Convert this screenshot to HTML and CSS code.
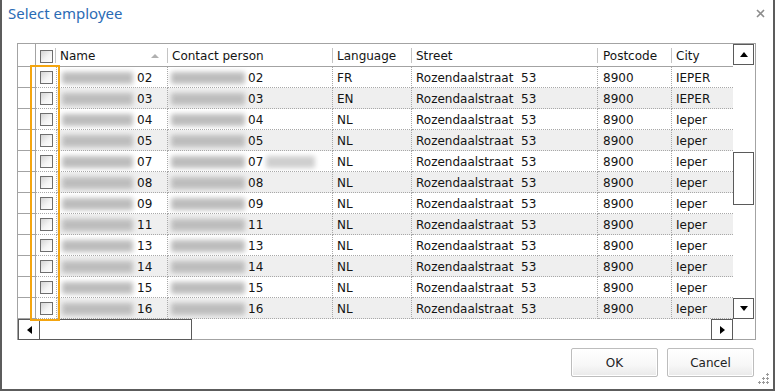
FILE: index.html
```html
<!DOCTYPE html>
<html>
<head>
<meta charset="utf-8">
<link rel="stylesheet" href="styles.css">
</head>
<body>
<div class="window">
  <div class="titlebar">
    <span class="title">Select employee</span>
    <svg class="close" width="9" height="9" viewBox="0 0 9 9"><path d="M1 1L8 8M8 1L1 8" stroke="#8c8c8c" stroke-width="1.6"/></svg>
  </div>
  <div class="grid">
    <div class="main">
      <div class="table">
        <div class="row head">
          <div class="c rh"></div>
          <div class="c cb sep"><span class="chk"></span></div>
          <div class="c name sep">Name<span class="sort"></span></div>
          <div class="c contact sep">Contact person</div>
          <div class="c lang sep">Language</div>
          <div class="c street sep">Street</div>
          <div class="c pc sep">Postcode</div>
          <div class="c city">City</div>
        </div>
        <div class="row">
          <div class="c rh"></div><div class="c cb"><span class="chk"></span></div>
          <div class="c name"><span class="blur b1"></span>02</div>
          <div class="c contact"><span class="blur b2"></span>02</div>
          <div class="c lang">FR</div><div class="c street">Rozendaalstraat  53</div><div class="c pc">8900</div><div class="c city">IEPER</div>
        </div>
        <div class="row alt">
          <div class="c rh"></div><div class="c cb"><span class="chk"></span></div>
          <div class="c name"><span class="blur b1"></span>03</div>
          <div class="c contact"><span class="blur b2"></span>03</div>
          <div class="c lang">EN</div><div class="c street">Rozendaalstraat  53</div><div class="c pc">8900</div><div class="c city">IEPER</div>
        </div>
        <div class="row">
          <div class="c rh"></div><div class="c cb"><span class="chk"></span></div>
          <div class="c name"><span class="blur b1"></span>04</div>
          <div class="c contact"><span class="blur b2"></span>04</div>
          <div class="c lang">NL</div><div class="c street">Rozendaalstraat  53</div><div class="c pc">8900</div><div class="c city">Ieper</div>
        </div>
        <div class="row alt">
          <div class="c rh"></div><div class="c cb"><span class="chk"></span></div>
          <div class="c name"><span class="blur b1"></span>05</div>
          <div class="c contact"><span class="blur b2"></span>05</div>
          <div class="c lang">NL</div><div class="c street">Rozendaalstraat  53</div><div class="c pc">8900</div><div class="c city">Ieper</div>
        </div>
        <div class="row">
          <div class="c rh"></div><div class="c cb"><span class="chk"></span></div>
          <div class="c name"><span class="blur b1"></span>07</div>
          <div class="c contact"><span class="blur b2"></span>07<span class="blur b3"></span></div>
          <div class="c lang">NL</div><div class="c street">Rozendaalstraat  53</div><div class="c pc">8900</div><div class="c city">Ieper</div>
        </div>
        <div class="row alt">
          <div class="c rh"></div><div class="c cb"><span class="chk"></span></div>
          <div class="c name"><span class="blur b1"></span>08</div>
          <div class="c contact"><span class="blur b2"></span>08</div>
          <div class="c lang">NL</div><div class="c street">Rozendaalstraat  53</div><div class="c pc">8900</div><div class="c city">Ieper</div>
        </div>
        <div class="row">
          <div class="c rh"></div><div class="c cb"><span class="chk"></span></div>
          <div class="c name"><span class="blur b1"></span>09</div>
          <div class="c contact"><span class="blur b2"></span>09</div>
          <div class="c lang">NL</div><div class="c street">Rozendaalstraat  53</div><div class="c pc">8900</div><div class="c city">Ieper</div>
        </div>
        <div class="row alt">
          <div class="c rh"></div><div class="c cb"><span class="chk"></span></div>
          <div class="c name"><span class="blur b1"></span>11</div>
          <div class="c contact"><span class="blur b2"></span>11</div>
          <div class="c lang">NL</div><div class="c street">Rozendaalstraat  53</div><div class="c pc">8900</div><div class="c city">Ieper</div>
        </div>
        <div class="row">
          <div class="c rh"></div><div class="c cb"><span class="chk"></span></div>
          <div class="c name"><span class="blur b1"></span>13</div>
          <div class="c contact"><span class="blur b2"></span>13</div>
          <div class="c lang">NL</div><div class="c street">Rozendaalstraat  53</div><div class="c pc">8900</div><div class="c city">Ieper</div>
        </div>
        <div class="row alt">
          <div class="c rh"></div><div class="c cb"><span class="chk"></span></div>
          <div class="c name"><span class="blur b1"></span>14</div>
          <div class="c contact"><span class="blur b2"></span>14</div>
          <div class="c lang">NL</div><div class="c street">Rozendaalstraat  53</div><div class="c pc">8900</div><div class="c city">Ieper</div>
        </div>
        <div class="row">
          <div class="c rh"></div><div class="c cb"><span class="chk"></span></div>
          <div class="c name"><span class="blur b1"></span>15</div>
          <div class="c contact"><span class="blur b2"></span>15</div>
          <div class="c lang">NL</div><div class="c street">Rozendaalstraat  53</div><div class="c pc">8900</div><div class="c city">Ieper</div>
        </div>
        <div class="row alt">
          <div class="c rh"></div><div class="c cb"><span class="chk"></span></div>
          <div class="c name"><span class="blur b1"></span>16</div>
          <div class="c contact"><span class="blur b2"></span>16</div>
          <div class="c lang">NL</div><div class="c street">Rozendaalstraat  53</div><div class="c pc">8900</div><div class="c city">Ieper</div>
        </div>
      </div>
      <div class="vscroll">
        <div class="sbtn"><span class="tri up"></span></div>
        <div class="track"><div class="thumb vthumb"></div></div>
        <div class="sbtn"><span class="tri down"></span></div>
      </div>
    </div>
    <div class="hscroll">
      <div class="sbtn hbtn"><span class="tri left"></span></div>
      <div class="thumb hthumb"></div>
      <div class="hspace"></div>
      <div class="sbtn hbtn"><span class="tri right"></span></div>
      <div class="corner"></div>
    </div>
  </div>
  <div class="footer">
    <button class="btn">OK</button>
    <button class="btn">Cancel</button>
  </div>
  <div class="highlight"></div>
  <svg class="grip" width="14" height="14" viewBox="0 0 14 14" fill="#9a9a9a">
    <rect x="11" y="1" width="1" height="3"/><rect x="10" y="2" width="3" height="1"/>
    <rect x="7" y="5" width="1" height="3"/><rect x="6" y="6" width="3" height="1"/>
    <rect x="11" y="5" width="1" height="3"/><rect x="10" y="6" width="3" height="1"/>
    <rect x="3" y="9" width="1" height="3"/><rect x="2" y="10" width="3" height="1"/>
    <rect x="7" y="9" width="1" height="3"/><rect x="6" y="10" width="3" height="1"/>
    <rect x="11" y="9" width="1" height="3"/><rect x="10" y="10" width="3" height="1"/>
  </svg>
</div>
</body>
</html>
```
FILE: styles.css
```css
html, body { margin: 0; padding: 0; background: #fff; }
.window {
  position: relative;
  width: 775px; height: 391px;
  box-sizing: border-box;
  border: 2px solid #5c5c5c; border-top: 0;
  background: #fff;
  display: flex; flex-direction: column;
  font-family: "DejaVu Sans", Verdana, sans-serif;
  font-size: 12px;
  color: #141414;
}
.titlebar {
  height: 43px;
  display: flex;
  align-items: flex-start;
  padding-left: 6px;
  flex: none;
}
.title {
  font-family: "Noto Sans", "Open Sans", sans-serif;
  font-size: 15px;
  line-height: 20px;
  margin-top: 3px;
  color: #2a6bb5;
}
.close { margin-left: auto; margin-top: 9px; margin-right: 8px; }
.grid {
  margin-left: 15px;
  width: 739px; height: 297px;
  box-sizing: border-box;
  border: 1px solid #a3a3a3;
  display: flex; flex-direction: column;
  flex: none;
}
.main { display: flex; height: 275px; }
.table { width: 715px; display: flex; flex-direction: column; }
.row { display: flex; height: 21px; flex: none; }
.row.head { height: 23px; }
.c {
  box-sizing: border-box;
  height: 100%;
  display: flex; align-items: center;
  border-right: 1px dotted #a8a8a8;
  border-bottom: 1px dotted #a8a8a8;
  white-space: pre;
  overflow: hidden;
  padding-left: 4px;
  padding-top: 1px;
}
.row.alt .c { background: #efefef; }
.row.alt .c.rh, .row.alt .c.cb { background: #fff; }
.head .c {
  border-right: 0;
  border-bottom: 1px solid #a3a3a3;
  padding-top: 2px;
}
.head .c.sep {
  background: linear-gradient(#c4c4c4, #c4c4c4) right 4px / 1px 15px no-repeat;
}
.c.rh { width: 18px; border-right: 1px solid #a3a3a3 !important; border-bottom-style: solid; border-bottom-color: #a3a3a3; padding: 0; }
.c.cb { width: 21px; padding: 0; justify-content: center; }
.head .c.cb { width: 20px; padding-top: 3px; }
.c.name { width: 111px; }
.head .c.name { width: 112px; }
.c.contact { width: 165px; padding-left: 2px; }
.head .c.contact { padding-left: 4px; }
.c.lang { width: 79px; }
.c.street { width: 186px; }
.c.pc { width: 74px; padding-left: 5px; }
.c.city { width: 61px; border-right: 0; }
.chk {
  width: 13px; height: 13px;
  box-sizing: border-box;
  border: 1px solid #6e6e6e;
  background: linear-gradient(135deg, #d4d4d4 0%, #f4f4f4 55%, #ffffff 100%);
}
.sort {
  margin-left: auto; margin-right: 9px;
  width: 0; height: 0;
  border-left: 4px solid transparent;
  border-right: 4px solid transparent;
  border-bottom: 4px solid #b0b0b0;
}
.blur {
  display: inline-block;
  height: 12px;
  background: #bdbdbd;
  filter: blur(2.5px);
  border-radius: 2px;
}
.b1 { width: 71px; margin-right: 4px; margin-left: 1px; }
.b2 { width: 74px; margin-right: 3px; margin-left: 1px; }
.b3 { width: 49px; margin-left: 3px; background: #cfcfcf; }
.vscroll { width: 21px; display: flex; flex-direction: column; }
.sbtn {
  box-sizing: border-box;
  width: 21px; height: 21px;
  border: 1px solid #5a5a5a;
  background: #fff;
  display: flex; align-items: center; justify-content: center;
  flex: none;
}
.track { flex: 1; }
.thumb { box-sizing: border-box; border: 1px solid #5a5a5a; background: #fff; }
.vthumb { margin-top: 87px; height: 53px; width: 21px; }
.tri { width: 0; height: 0; }
.tri.up { border-left: 4px solid transparent; border-right: 4px solid transparent; border-bottom: 5px solid #000; }
.tri.down { border-left: 4px solid transparent; border-right: 4px solid transparent; border-top: 5px solid #000; }
.tri.left { border-top: 4px solid transparent; border-bottom: 4px solid transparent; border-right: 5px solid #000; }
.tri.right { border-top: 4px solid transparent; border-bottom: 4px solid transparent; border-left: 5px solid #000; }
.hscroll { display: flex; height: 20px; }
.hbtn { width: 22px; height: 21px; }
.hthumb { width: 152px; height: 21px; border-left: 0; }
.hspace { flex: 1; }
.corner { width: 22px; }
.footer {
  display: flex; justify-content: flex-end; gap: 9px;
  margin-top: 8px; margin-right: 19px;
}
.btn {
  width: 87px; height: 29px;
  box-sizing: border-box;
  border: 1px solid #bdbdbd;
  border-radius: 2px;
  background: linear-gradient(#ffffff 0%, #f7f7f7 60%, #e9e9e9 100%);
  box-shadow: inset 0 0 0 1px #fff;
  font-family: "DejaVu Sans", Verdana, sans-serif;
  font-size: 12px;
  color: #222;
  padding: 0;
}
.highlight {
  position: absolute;
  left: 28px; top: 65px;
  width: 30px; height: 256px;
  box-sizing: border-box;
  border: 2px solid #f4a50f;
}
.grip { position: absolute; right: 3px; bottom: 3px; }
```
